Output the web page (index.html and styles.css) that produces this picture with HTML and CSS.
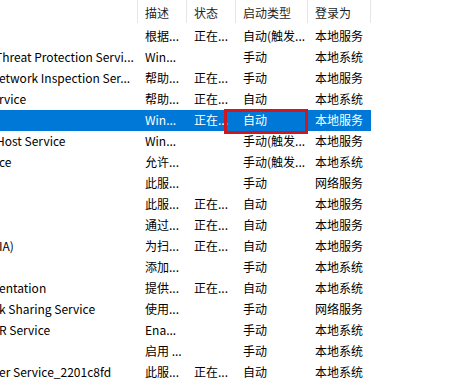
FILE: index.html
```html
<!DOCTYPE html>
<html lang="zh-CN">
<head>
<meta charset="utf-8">
<link rel="stylesheet" href="styles.css">
</head>
<body>
<div class="list">
  <div class="row header">
    <div class="cell name"></div>
    <div class="cell">描述</div>
    <div class="cell">状态</div>
    <div class="cell">启动类型</div>
    <div class="cell">登录为</div>
  </div>
  <div class="row"><div class="cell name"></div><div class="cell">根据...</div><div class="cell">正在...</div><div class="cell">自动(触发...</div><div class="cell">本地服务</div></div>
  <div class="row"><div class="cell name"><span class="cut5">Threat Protection Servi...</span></div><div class="cell">Win...</div><div class="cell"></div><div class="cell">手动</div><div class="cell">本地系统</div></div>
  <div class="row"><div class="cell name"><span class="cut1">etwork Inspection Ser...</span></div><div class="cell">帮助...</div><div class="cell">正在...</div><div class="cell">手动</div><div class="cell">本地服务</div></div>
  <div class="row"><div class="cell name"><span class="cut1">rvice</span></div><div class="cell">帮助...</div><div class="cell">正在...</div><div class="cell">自动</div><div class="cell">本地系统</div></div>
  <div class="row selected"><div class="cell name"></div><div class="cell">Win...</div><div class="cell">正在...</div><div class="cell">自动</div><div class="cell">本地服务</div>
    <div class="mark"></div>
  </div>
  <div class="row"><div class="cell name"><span class="cut4">Host Service</span></div><div class="cell">Win...</div><div class="cell"></div><div class="cell">手动(触发...</div><div class="cell">本地服务</div></div>
  <div class="row"><div class="cell name"><span class="cut1">ce</span></div><div class="cell">允许...</div><div class="cell"></div><div class="cell">手动(触发...</div><div class="cell">本地系统</div></div>
  <div class="row"><div class="cell name"></div><div class="cell">此服...</div><div class="cell"></div><div class="cell">手动</div><div class="cell">网络服务</div></div>
  <div class="row"><div class="cell name"></div><div class="cell">此服...</div><div class="cell">正在...</div><div class="cell">自动</div><div class="cell">本地服务</div></div>
  <div class="row"><div class="cell name"></div><div class="cell">通过...</div><div class="cell">正在...</div><div class="cell">自动</div><div class="cell">本地服务</div></div>
  <div class="row"><div class="cell name"><span class="cut1">IA)</span></div><div class="cell">为扫...</div><div class="cell">正在...</div><div class="cell">自动</div><div class="cell">本地服务</div></div>
  <div class="row"><div class="cell name"></div><div class="cell">添加...</div><div class="cell"></div><div class="cell">手动</div><div class="cell">本地系统</div></div>
  <div class="row"><div class="cell name"><span class="cut1">entation</span></div><div class="cell">提供...</div><div class="cell">正在...</div><div class="cell">自动</div><div class="cell">本地系统</div></div>
  <div class="row"><div class="cell name"><span class="cut1">k Sharing Service</span></div><div class="cell">使用...</div><div class="cell"></div><div class="cell">手动</div><div class="cell">网络服务</div></div>
  <div class="row"><div class="cell name"><span class="cut1">R Service</span></div><div class="cell">Ena...</div><div class="cell"></div><div class="cell">手动</div><div class="cell">本地系统</div></div>
  <div class="row"><div class="cell name"></div><div class="cell">启用 ...</div><div class="cell"></div><div class="cell">手动</div><div class="cell">本地系统</div></div>
  <div class="row"><div class="cell name"><span class="cut1">er Service_2201c8fd</span></div><div class="cell">此服...</div><div class="cell">正在...</div><div class="cell">自动</div><div class="cell">本地系统</div></div>
</div>
</body>
</html>
```

FILE: styles.css
```css
html, body {
  margin: 0;
  padding: 0;
  background: #ffffff;
  overflow: hidden;
}
.list {
  font-family: "Noto Sans CJK SC", "Noto Sans", sans-serif;
  font-size: 12px;
  color: #000000;
  width: 455px;
}
.row {
  position: relative;
  display: grid;
  grid-template-columns: 138px 49px 49px 72px 63px;
  height: 21px;
  line-height: 19px;
}
.header {
  height: 26px;
  line-height: 25px;
  color: #1e1e1e;
}
.cell {
  padding-left: 7px;
  white-space: nowrap;
  overflow: hidden;
}
.cell.name {
  padding-left: 0;
}
.header .cell {
  border-right: 1px solid #e6e6e6;
  height: 23px;
}
.selected .cell {
  background: #0078d7;
  color: #ffffff;
}
.cut1 { margin-left: -1px; }
.cut4 { margin-left: -4px; }
.cut5 { margin-left: -5px; }
.mark {
  position: absolute;
  left: 224px;
  top: -1px;
  width: 78px;
  height: 19px;
  border: 3px solid #d0161e;
}
```
